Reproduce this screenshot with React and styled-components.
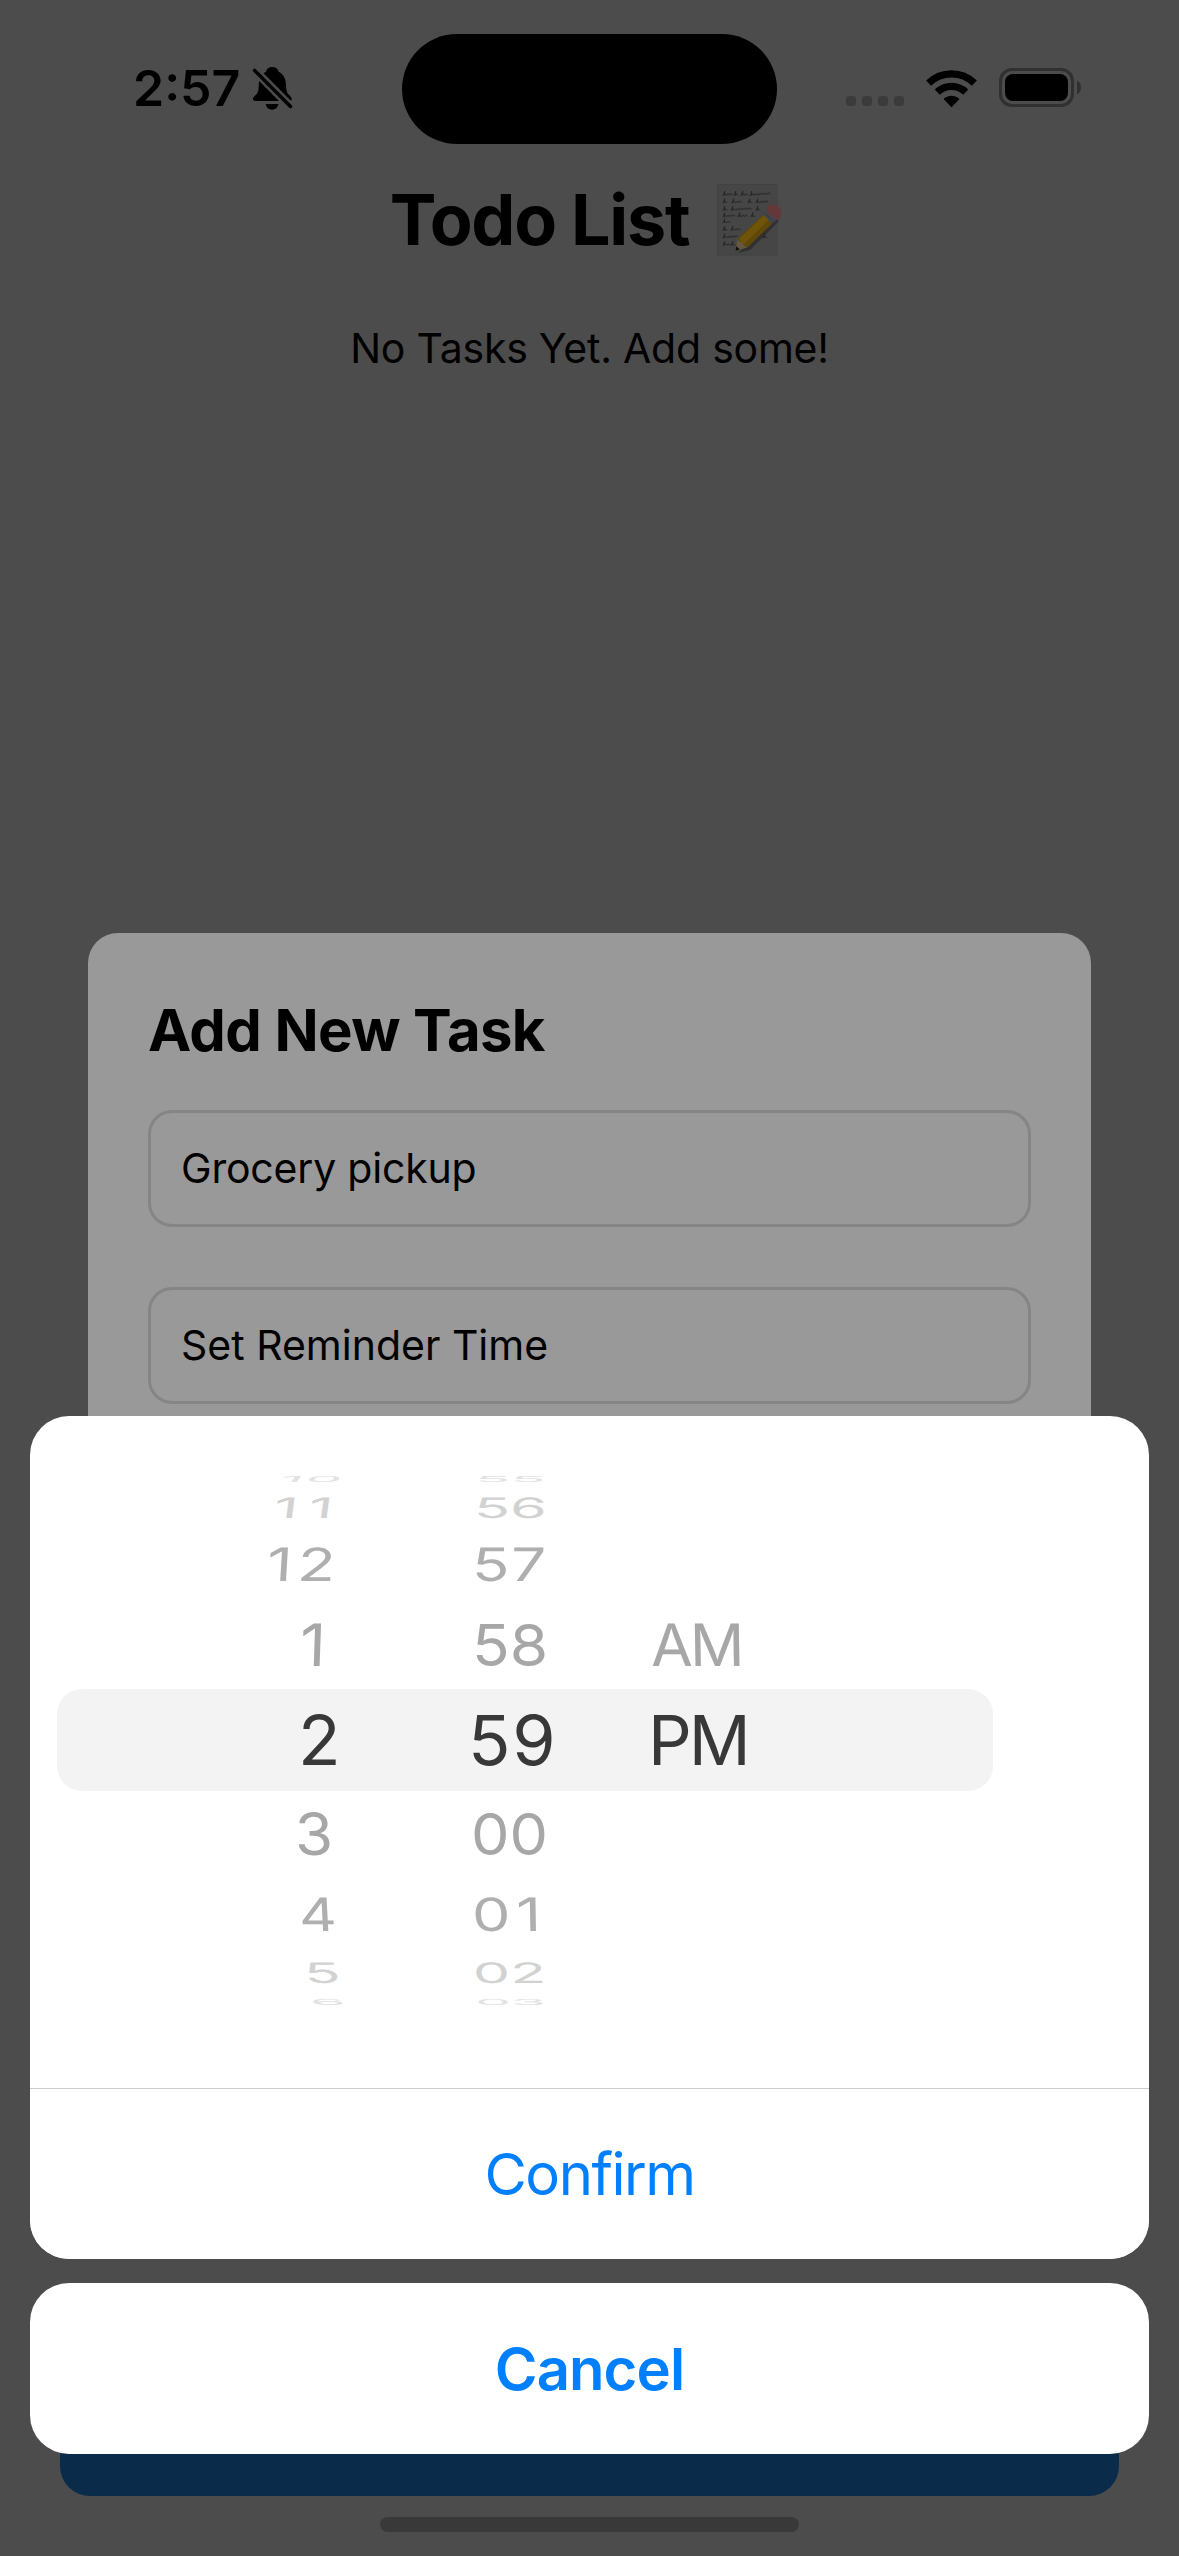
import React from "react";
import styled, { createGlobalStyle } from "styled-components";

const color = {
  backdrop: "#4c4c4c",
  card: "#999999",
  cardBorder: "#858585",
  faint: "#3b3b3b",
  button: "#0a2c4a",
  link: "#007fff",
};

const GlobalStyle = createGlobalStyle`
  * { box-sizing: border-box; }
  body {
    margin: 0;
    background: ${color.backdrop};
    font-family: Inter, "Liberation Sans", sans-serif;
    color: #000;
    font-kerning: normal;
  }
`;

/* ---------- layers ---------- */

const Phone = styled.div`
  width: 1179px;
  height: 2556px;
  display: grid;
  overflow: hidden;
  background: ${color.backdrop};
`;

const Screen = styled.main`
  grid-area: 1 / 1;
  display: flex;
  flex-direction: column;
`;

const DialogLayer = styled.div`
  grid-area: 1 / 1;
  display: flex;
  align-items: center;
  justify-content: center;
`;

const SheetLayer = styled.div`
  grid-area: 1 / 1;
  z-index: 1;
  display: flex;
  flex-direction: column;
  justify-content: flex-end;
  gap: 24px;
  padding: 0 30px 102px;
`;

/* ---------- status bar ---------- */

const StatusBar = styled.header`
  height: 176px;
  display: grid;
  grid-template-columns: 402px 375px 402px;
  align-items: center;
`;

const StatusLeft = styled.div`
  display: flex;
  align-items: center;
  gap: 12.6px;
  padding-left: 133px;
`;

const Clock = styled.span`
  font-size: 50px;
  font-weight: 600;
  line-height: 60px;
`;

const Island = styled.div`
  height: 110px;
  margin-top: 2px;
  border-radius: 55px;
  background: #000;
`;

const StatusRight = styled.div`
  display: flex;
  align-items: center;
  gap: 22px;
  padding-left: 69px;
`;

const SignalDots = styled.div`
  display: flex;
  gap: 6px;
  margin-top: 26px;
`;

const SignalDot = styled.i`
  width: 10px;
  height: 10px;
  border-radius: 3.5px;
  background: ${color.faint};
`;

const Battery = styled.div`
  display: flex;
  align-items: center;
  gap: 3px;
  margin-top: -1px;
`;

const BatteryShell = styled.div`
  width: 75px;
  height: 39px;
  padding: 3px;
  border: 3px solid #303030;
  border-radius: 13px;
`;

const BatteryLevel = styled.div`
  height: 100%;
  border-radius: 8px;
  background: #000;
`;

const BatteryCap = styled.div`
  width: 4px;
  height: 13px;
  border-radius: 0 4px 4px 0 / 0 6.5px 6.5px 0;
  background: #303030;
`;

/* ---------- todo screen ---------- */

const TitleRow = styled.div`
  height: 87px;
  display: flex;
  align-items: center;
  justify-content: center;
  gap: 28px;
`;

const Title = styled.h1`
  margin: 0;
  font-size: 70px;
  font-weight: 700;
  letter-spacing: -1.3px;
  line-height: 84px;
`;

const EmptyMessage = styled.p`
  margin: 0;
  height: 170px;
  display: flex;
  align-items: center;
  justify-content: center;
  font-size: 41px;
  letter-spacing: -0.23px;
`;

const AddButton = styled.div`
  height: 165px;
  margin: auto 60px 21px;
  border-radius: 30px;
  background: ${color.button};
`;

const HomeIndicator = styled.div`
  width: 419px;
  height: 15px;
  margin: 0 auto 24px;
  border-radius: 8px;
  background: #393939;
`;

/* ---------- task dialog ---------- */

const TaskCard = styled.section`
  width: 1003px;
  height: 690px;
  padding: 60px;
  border-radius: 30px;
  background: ${color.card};
  display: flex;
  flex-direction: column;
`;

const CardHeading = styled.h2`
  margin: 0 0 44px;
  font-size: 58px;
  font-weight: 700;
  letter-spacing: -0.6px;
  line-height: 74px;
  height: 73px;
`;

const Field = styled.div`
  height: 117px;
  margin-bottom: 60px;
  padding: 0 30px 2px;
  border: 3px solid ${color.cardBorder};
  border-radius: 24px;
  display: flex;
  align-items: center;
  font-size: 41px;
  letter-spacing: ${(p) => p.$tracking || 0}px;
`;

/* ---------- time sheet ---------- */

const Sheet = styled.section`
  border-radius: 39px;
  background: #fff;
  display: flex;
  flex-direction: column;
`;

const Picker = styled.div`
  height: 672px;
  display: grid;
  align-items: start;
`;

const SelectionBand = styled.div`
  grid-area: 1 / 1;
  width: 936px;
  height: 102px;
  margin: 273px 0 0 27px;
  border-radius: 25px;
  background: #f3f3f3;
`;

const Wheels = styled.div`
  grid-area: 1 / 1;
  z-index: 1;
  display: grid;
  grid-template-columns: 200px 180px 200px;
  padding: 53.6px 0 0 220px;
`;

const Wheel = styled.div`
  display: grid;
  grid-template-rows: 17.8px 39.2px 75.4px 87px 102px 85.4px 76.2px 38.8px 19.2px;
`;

const WheelRow = styled.div`
  grid-row: ${(p) => p.$row};
  height: 100%;
  min-height: 0;
  display: flex;
  align-items: center;
`;

const WheelText = styled.span`
  flex: none;
  margin: -39px 0 -41px ${(p) => p.$shift}px;
  font-size: 68.6px;
  line-height: 80px;
  letter-spacing: ${(p) => p.$tracking || 0}px;
  color: ${(p) => p.$ink};
  transform-origin: left center;
  transform: skewX(${(p) => p.$lean || 0}deg) scale(${(p) => p.$sx}, ${(p) => p.$sy});
`;

const SheetAction = styled.button`
  height: 171px;
  padding: 0;
  border: 0;
  border-top: ${(p) => (p.$divided ? "1px solid #cbcbcb" : "0")};
  border-radius: ${(p) => (p.$divided ? "0 0 39px 39px" : "39px")};
  background: #fff;
  color: ${color.link};
  font-family: inherit;
  font-size: 58px;
  font-weight: ${(p) => (p.$strong ? 600 : 400)};
  letter-spacing: ${(p) => (p.$strong ? -0.9 : -1.5)}px;
  line-height: 70px;
`;

/* ---------- icons ---------- */

const BellSlash = () => (
  <svg width="39" height="43" viewBox="0 0 39 43" overflow="visible">
    <path d="M19.3 0c-3.2 0-5.8 2-6.3 4.8C8 7 6 12 5.8 18c-.3 6-.8 8-3.6 10.5C.6 30 0 31 0 32c0 1.3 1 2 2.5 2h33.8c1.5 0 2.5-.7 2.5-2 0-1-.6-2-2.2-3.5-2.8-2.5-3.3-4.5-3.6-10.5C32.8 12 30.6 7 25.7 4.8 25.1 2 22.5 0 19.3 0z" />
    <path d="M12.7 37h12.7c-.5 3.5-3 5.7-6.3 5.7s-5.9-2.2-6.4-5.7z" />
    <path d="M-1 .7 40 42" stroke={color.backdrop} strokeWidth="8.6" />
    <path d="M1.6 3.4 37.5 39.5" stroke="#000" strokeWidth="3.5" strokeLinecap="round" />
  </svg>
);

const Wifi = () => (
  <svg width="51" height="37" viewBox="0 0 51 37" overflow="visible">
    <g fill="none" stroke="#000" strokeWidth="7.2">
      <path d="M2.6 13.1A33 33 0 0 1 48.4 13.1" />
      <path d="M11.3 22.2A20.4 20.4 0 0 1 39.7 22.2" />
    </g>
    <path d="M25.5 36.3 18.6 29A11.2 11.2 0 0 1 32.4 29Z" stroke="#000" strokeWidth="1.6" strokeLinejoin="round" />
  </svg>
);

/* handwritten words on the memo: x, baseline y, number of letters */
const words = [
  [6, 11.5, 3], [17, 11.5, 1], [24, 11.5, 2], [33, 11.5, 7],
  [6, 19, 1], [15, 19, 3], [31, 19, 1], [39, 19, 4],
  [6, 26.5, 1], [14, 26.5, 7], [39, 26.5, 1],
  [6, 33, 4], [21, 33, 3], [34, 33, 1],
  [6, 39, 2],
  [6, 46.5, 1], [14, 46.5, 3],
  [6, 54, 5], [46, 54, 1],
  [6, 61.5, 2], [14, 61.5, 1],
];

const Memo = () => (
  <svg width="72" height="72" viewBox="0 0 72 72">
    <rect x=".5" y=".5" width="59.5" height="70.5" fill="#464646" stroke="#424242" />
    <g fill="none" stroke="#232323" strokeWidth=".8" strokeLinecap="round" strokeLinejoin="round">
      {words.map(([x, y, n]) => (
        <path key={`${x}-${y}`} d={`M${x} ${y}l1.8-4.4l-.6 4.4` + "q1.5-2.8 1.7-1.4t1 1.2".repeat(n)} />
      ))}
    </g>
    <path d="M21 69 33 66 62 37 58 33 30 60Z" fill="#2a2a2a" opacity=".75" />
    <path d="M18.6 67 20.6 54.8 30.7 63.2Z" fill="#66573f" />
    <path d="M18.6 67 19.3 62.3 22.8 65.3Z" fill="#101010" />
    <path d="M20.6 54.8 46 30.8 55 39.8 30.7 63.2 27 61.5 25 58.2 22 57.5Z" fill="#5f4809" />
    <path d="M22.2 54.8 47.4 31 52 35.6 27 60 25 58.2Z" fill="#6f5409" />
    <path d="M46 30.8 50 27.2 59.6 36.2 55 39.8Z" fill="#42474c" />
    <path d="M48 29 57.3 38" stroke="#2f3337" strokeWidth=".8" />
    <path d="M50 27.2C49.5 23 53 19.5 57.5 20.5 62 21.8 64.8 25.5 64.3 29.5 64 32.5 62.3 35.3 59.6 36.2Z" fill="#643839" />
  </svg>
);

/* ---------- data ---------- */

const hours = [
  { text: "10", shift: 30, sx: 0.85, sy: 0.12, lean: -35, tracking: 2.5, ink: "#e2e2e2" },
  { text: "11", shift: 23.5, sx: 0.87, sy: 0.41, lean: -7.5, tracking: 12, ink: "#d2d2d2" },
  { text: "12", shift: 16.5, sx: 0.91, sy: 0.67, lean: -3.5, tracking: 5.6, ink: "#afafaf" },
  { text: "1", shift: 49.5, sx: 0.93, sy: 0.85, lean: -2, ink: "#a7a7a7" },
  { text: "2", shift: 48.3, sx: 1.02, sy: 1, ink: "#383838" },
  { text: "3", shift: 45, sx: 0.9, sy: 0.85, lean: 1, ink: "#a7a7a7" },
  { text: "4", shift: 49, sx: 0.85, sy: 0.67, lean: 3, ink: "#afafaf" },
  { text: "5", shift: 54, sx: 0.87, sy: 0.41, lean: 7, ink: "#d2d2d2" },
  { text: "6", shift: 60, sx: 0.83, sy: 0.12, lean: 30, ink: "#e2e2e2" },
];

const minutes = [
  { text: "55", shift: 24.7, sx: 0.85, sy: 0.12, lean: -8, ink: "#e2e2e2" },
  { text: "56", shift: 23.6, sx: 0.865, sy: 0.41, lean: -2, ink: "#d2d2d2" },
  { text: "57", shift: 22, sx: 0.9, sy: 0.67, lean: -1, tracking: 1.6, ink: "#afafaf" },
  { text: "58", shift: 21.5, sx: 0.905, sy: 0.85, ink: "#a7a7a7" },
  { text: "59", shift: 17.6, sx: 1.02, sy: 1, tracking: 1.6, ink: "#383838" },
  { text: "00", shift: 21, sx: 0.89, sy: 0.85, ink: "#a7a7a7" },
  { text: "01", shift: 22, sx: 0.89, sy: 0.67, lean: 1, tracking: 6.5, ink: "#afafaf" },
  { text: "02", shift: 23.3, sx: 0.86, sy: 0.41, lean: 2, ink: "#d2d2d2" },
  { text: "03", shift: 25.3, sx: 0.83, sy: 0.12, lean: 8, ink: "#e2e2e2" },
];

const periods = [
  { text: "AM", row: 4, shift: 21.4, sx: 0.88, sy: 0.85, lean: 1, tracking: -3, ink: "#a7a7a7" },
  { text: "PM", row: 5, shift: 18, sx: 1, sy: 1, tracking: -3, ink: "#383838" },
];

const TimeWheel = ({ items }) => (
  <Wheel>
    {items.map((item, i) => (
      <WheelRow key={item.text} $row={item.row || i + 1}>
        <WheelText
          $shift={item.shift}
          $sx={item.sx}
          $sy={item.sy}
          $lean={item.lean}
          $tracking={item.tracking}
          $ink={item.ink}
        >
          {item.text}
        </WheelText>
      </WheelRow>
    ))}
  </Wheel>
);

export default function App() {
  return (
    <>
      <GlobalStyle />
      <Phone>
        <Screen>
          <StatusBar>
            <StatusLeft>
              <Clock>2:57</Clock>
              <BellSlash />
            </StatusLeft>
            <Island />
            <StatusRight>
              <SignalDots>
                <SignalDot />
                <SignalDot />
                <SignalDot />
                <SignalDot />
              </SignalDots>
              <Wifi />
              <Battery>
                <BatteryShell>
                  <BatteryLevel />
                </BatteryShell>
                <BatteryCap />
              </Battery>
            </StatusRight>
          </StatusBar>
          <TitleRow>
            <Title>Todo List</Title>
            <Memo />
          </TitleRow>
          <EmptyMessage>No Tasks Yet. Add some!</EmptyMessage>
          <AddButton />
          <HomeIndicator />
        </Screen>

        <DialogLayer>
          <TaskCard>
            <CardHeading>Add New Task</CardHeading>
            <Field $tracking={-0.2}>Grocery pickup</Field>
            <Field>Set Reminder Time</Field>
          </TaskCard>
        </DialogLayer>

        <SheetLayer>
          <Sheet>
            <Picker>
              <SelectionBand />
              <Wheels>
                <TimeWheel items={hours} />
                <TimeWheel items={minutes} />
                <TimeWheel items={periods} />
              </Wheels>
            </Picker>
            <SheetAction $divided>Confirm</SheetAction>
          </Sheet>
          <SheetAction $strong>Cancel</SheetAction>
        </SheetLayer>
      </Phone>
    </>
  );
}
